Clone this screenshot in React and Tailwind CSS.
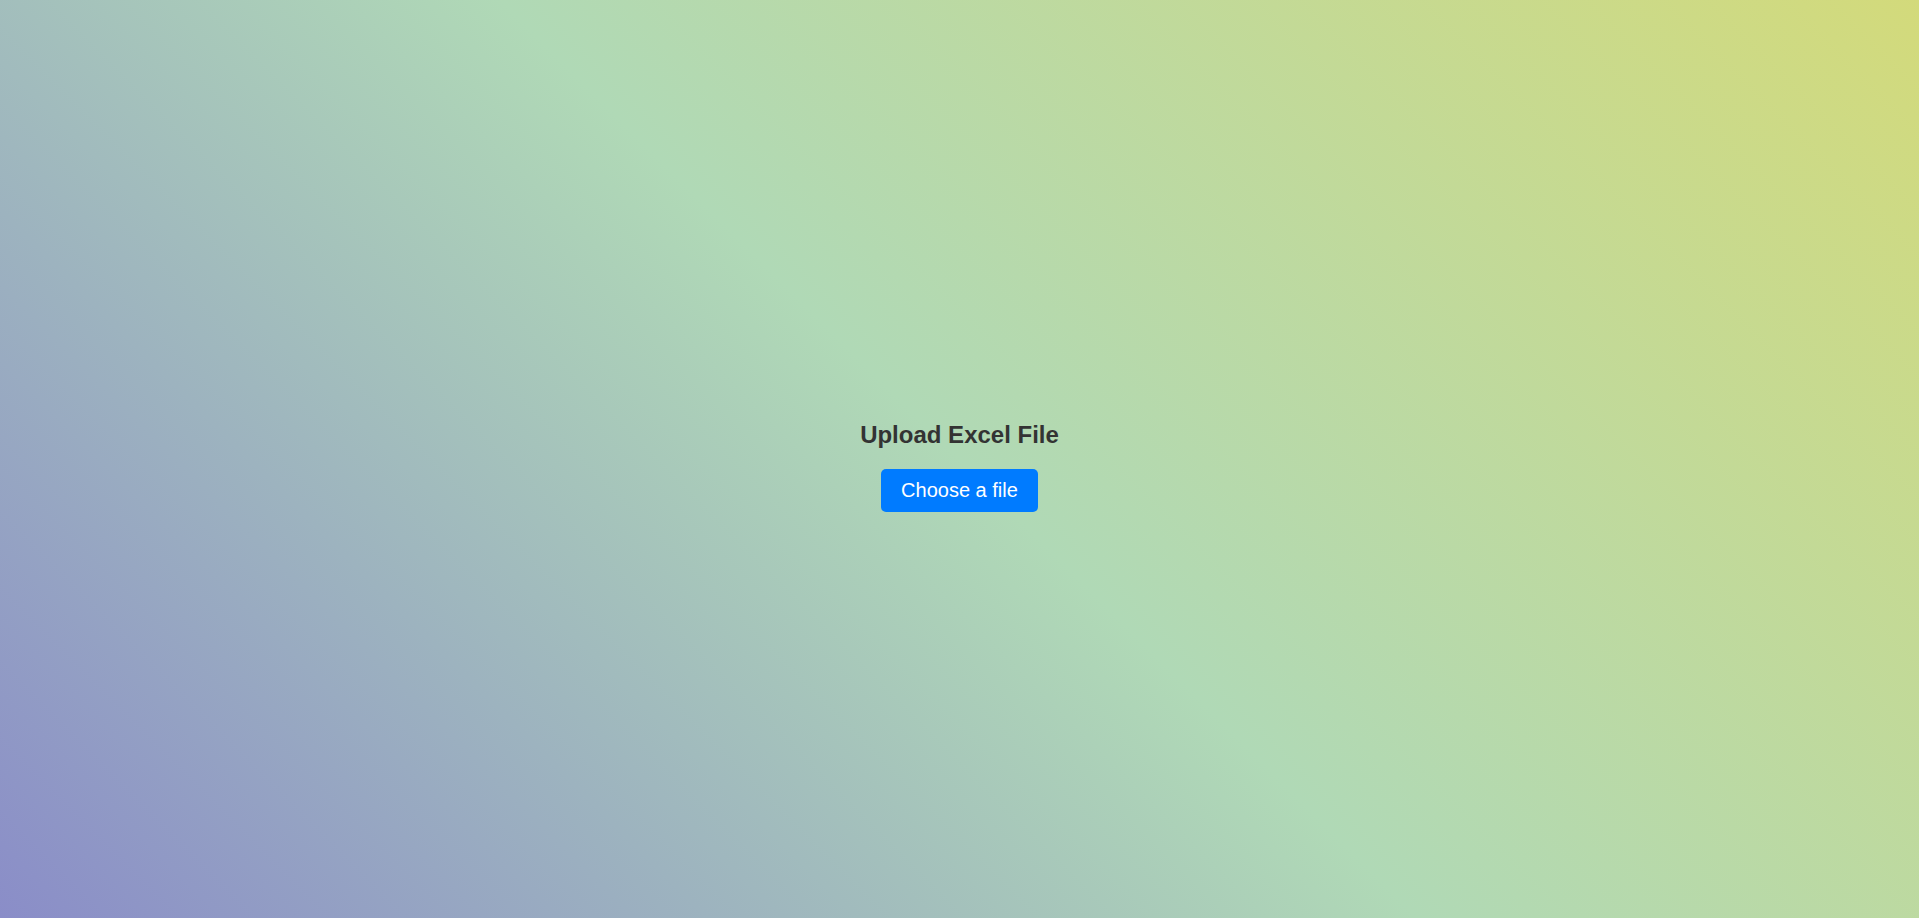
export default function App() {
  return (
    <div className="min-h-screen w-full flex items-center justify-center bg-[linear-gradient(45deg,#8a8dc8_0%,#b0d9b6_50%,#d3da7b_100%)] font-['Liberation_Sans',Arial,sans-serif]">
      <div className="flex flex-col items-center mt-[15px]">
        <h2 className="text-[24px] leading-[27.6px] font-bold text-[#333333]">Upload Excel File</h2>
        <label className="mt-[20px] bg-[#007bff] text-white text-[20px] leading-[23px] px-[20px] py-[10px] rounded-[5px] cursor-pointer">
          Choose a file
          <input type="file" className="hidden" />
        </label>
      </div>
    </div>
  );
}
